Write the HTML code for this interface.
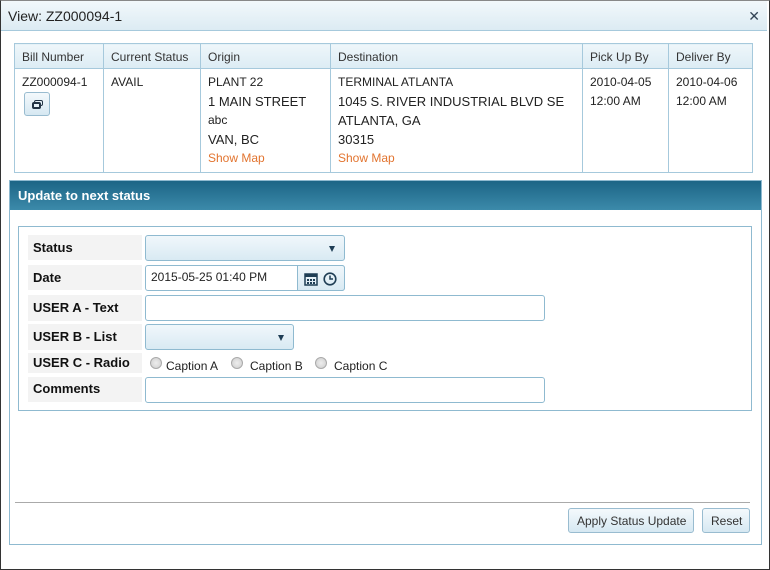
<!DOCTYPE html><html><head><style>
*{box-sizing:border-box;margin:0;padding:0}
body{width:770px;height:570px;background:#fff;font-family:"Liberation Sans",Arial,sans-serif;font-size:12px;color:#222;position:relative;overflow:hidden}
.a{position:absolute}
#win{left:0;top:0;width:770px;height:570px;border:1px solid #333;border-top-color:#888;background:#fff}
#title{left:1px;top:1px;width:766px;height:30px;background:linear-gradient(#f2f8fb,#dcebf3);border-bottom:1px solid #a6c9dc;font-size:14px;padding:7px 0 0 7px;color:#222}
#x{right:10px;top:8px;font-size:14px;color:#345}
table{position:absolute;left:14px;top:43px;width:739px;border-collapse:collapse;font-size:12px}
td,th{border:1px solid #a6c9dc;text-align:left;vertical-align:top;font-weight:normal;padding:0 7px}
th{height:25px;background:linear-gradient(#eef6fa,#dcecf4);color:#333;vertical-align:middle;padding-top:2px}
td{height:104px;padding-top:4px;line-height:19px}
td .b{font-size:13px}
.m{color:#e2742f}
.btn{border:1px solid #99bcd0;border-radius:3px;background:linear-gradient(#f4f9fc,#d6e8f2);color:#333}
#sec{left:9px;top:180px;width:753px;height:365px;border:1px solid #8fbad0}
#sh{left:0;top:0;width:751px;height:29px;background:linear-gradient(#1c6586,#3c8aaa);color:#fff;font-weight:bold;font-size:13px;padding:7px 0 0 8px}
#fs{left:8px;top:45px;width:734px;height:185px;border:1px solid #8fbad0}
.l{left:28px;width:114px;background:#f3f3f3;font-weight:bold;font-size:13px;padding-left:5px;color:#111}
.in{border:1px solid #8fbad0;border-radius:3px;background:#fff}
.sel{border:1px solid #8fbad0;border-radius:3px;background:linear-gradient(#f0f7fb,#d9eaf3)}
.ar{position:absolute;right:9px;top:10px;width:0;height:0;border-left:3px solid transparent;border-right:3px solid transparent;border-top:6px solid #1f3e55}
.r{width:12px;height:12px;border-radius:50%;border:1px solid #aaa;background:radial-gradient(#eee,#ccc)}
</style></head><body>
<div class="a" id="win"></div>
<div class="a" id="title">View: ZZ000094-1</div>
<div class="a" id="x">✕</div>
<table><tr><th style="width:89px">Bill Number</th><th style="width:97px">Current Status</th><th style="width:130px">Origin</th><th style="width:252px">Destination</th><th style="width:86px">Pick Up By</th><th>Deliver By</th></tr>
<tr><td>ZZ000094-1</td><td>AVAIL</td><td><div>PLANT 22</div><div class="b">1 MAIN STREET</div><div>abc</div><div class="b">VAN, BC</div><div class="m">Show Map</div></td><td><div>TERMINAL ATLANTA</div><div class="b">1045 S. RIVER INDUSTRIAL BLVD SE</div><div class="b">ATLANTA, GA</div><div class="b">30315</div><div class="m">Show Map</div></td><td>2010-04-05<br>12:00 AM</td><td>2010-04-06<br>12:00 AM</td></tr></table>
<div class="a btn" style="left:24px;top:92px;width:26px;height:24px"><div class="a" style="left:9px;top:7px;width:9px;height:6px;border:1.5px solid #234;border-radius:2px"></div><div class="a" style="left:7px;top:9px;width:9px;height:7px;border:2px solid #234;border-radius:2px;background:#e6f1f7"></div></div>
<div class="a" id="sec"><div class="a" id="sh">Update to next status</div><div class="a" id="fs"></div></div>
<div class="a l" style="top:235px;height:25px;padding-top:5px">Status</div>
<div class="a l" style="top:265px;height:25px;padding-top:5px">Date</div>
<div class="a l" style="top:295px;height:26px;padding-top:5px">USER A - Text</div>
<div class="a l" style="top:324px;height:26px;padding-top:5px">USER B - List</div>
<div class="a l" style="top:353px;height:20px;padding-top:2px">USER C - Radio</div>
<div class="a l" style="top:377px;height:25px;padding-top:4px">Comments</div>
<div class="a sel" style="left:145px;top:235px;width:200px;height:26px"><div class="ar"></div></div>
<div class="a in" style="left:145px;top:265px;width:200px;height:26px;padding:4px 0 0 5px">2015-05-25 01:40 PM</div>
<div class="a sel" style="left:297px;top:265px;width:48px;height:26px;border-radius:0 3px 3px 0">
<svg class="a" style="left:6px;top:6px" width="14" height="14" viewBox="0 0 14 14"><rect x="1" y="2" width="12" height="11" fill="none" stroke="#1f3e55" stroke-width="1.5"/><rect x="1" y="2" width="12" height="3" fill="#1f3e55"/><g fill="#1f3e55"><rect x="3" y="7" width="2" height="2"/><rect x="6" y="7" width="2" height="2"/><rect x="9" y="7" width="2" height="2"/><rect x="3" y="10" width="2" height="2"/><rect x="6" y="10" width="2" height="2"/><rect x="9" y="10" width="2" height="2"/></g></svg>
<svg class="a" style="left:25px;top:6px" width="14" height="14" viewBox="0 0 14 14"><circle cx="7" cy="7" r="5.8" fill="none" stroke="#1f3e55" stroke-width="1.6"/><path d="M7 3.5V7H10" fill="none" stroke="#1f3e55" stroke-width="1.5"/></svg></div>
<div class="a in" style="left:145px;top:295px;width:400px;height:26px"></div>
<div class="a sel" style="left:145px;top:324px;width:149px;height:26px"><div class="ar"></div></div>
<div class="a r" style="left:150px;top:357px"></div><div class="a" style="left:166px;top:359px">Caption A</div>
<div class="a r" style="left:231px;top:357px"></div><div class="a" style="left:250px;top:359px">Caption B</div>
<div class="a r" style="left:315px;top:357px"></div><div class="a" style="left:334px;top:359px">Caption C</div>
<div class="a in" style="left:145px;top:377px;width:400px;height:26px"></div>
<div class="a" style="left:15px;top:502px;width:735px;height:1px;background:#aaa"></div>
<div class="a btn" style="left:568px;top:508px;width:126px;height:25px;padding:5px 0 0 8px">Apply Status Update</div>
<div class="a btn" style="left:702px;top:508px;width:48px;height:25px;padding:5px 0 0 8px">Reset</div>
</body></html>
